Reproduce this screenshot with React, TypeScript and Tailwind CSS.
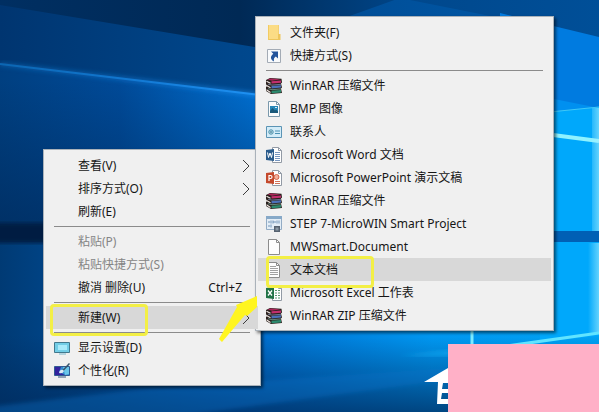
import type { ReactNode } from "react";
import clsx from "clsx";

type Item = {
  label?: string;
  icon?: ReactNode;
  shortcut?: string;
  submenu?: boolean;
  disabled?: boolean;
  active?: boolean;
  mark?: string;
};

const svgProps = { width: 16, height: 16, viewBox: "0 0 16 16", "aria-hidden": true };

// ICONS
function FolderIcon() {
  return (
    <svg {...svgProps}>
      <path d="M2 0h11v15H2z" fill="#fbdc85" />
      <path d="M2 0h1v15H2z" fill="#f2cb62" />
      <path d="M12 9h2.500v6H3v-1h9z" fill="#edc55c" />
      <path d="M12.500 0v9" fill="none" stroke="#f3d074" />
    </svg>
  );
}

function ShortcutIcon() {
  return (
    <svg {...svgProps}>
      <path d="M1.500 1.500h13v13h-13z" fill="#f8fafc" stroke="#a3abb5" />
      <path
        d="M5 3.500h7v7L9.800 8.400C8 9.500 7.500 11 8 13.500 4 11.500 4.200 8.200 7.300 5.800z"
        fill="#24559c"
      />
    </svg>
  );
}

function RarIcon() {
  return (
    <svg {...svgProps}>
      <path d="M0 2 4 0l11.500.8.5 3.700-1 1 1 4-1 1 1 4.500-11 1-5-3V9l1-1-1-2z" fill="#2a201d" />
      <path d="m1.500 1.500 3-1 10 .8-8.500 1.400z" fill="#a92558" />
      <path d="M5.500 3.300 15 2.600v2.200l-9.500.8z" fill="#c22f6e" />
      <path d="m5.500 8 9.500-.7v2.300l-9.500.8z" fill="#4b70ba" />
      <path d="m5.500 12.800 9.500-.7v2.300l-9.500.8z" fill="#2b8a6e" />
      <path d="m.5 3.200 4 2M.5 7.500l4 2.300M.5 11.800l4 2.700" stroke="#efe8e3" strokeWidth="1.100" />
      <path d="m2 6.200 4 .9 9-.8" fill="none" stroke="#8498bd" strokeWidth=".7" />
      <path d="m2 10.700 4 1 9-.8" fill="none" stroke="#7fb5a4" strokeWidth=".7" />
    </svg>
  );
}

function BmpIcon() {
  return (
    <svg {...svgProps}>
      <path d="M2.500.5h8l3 3v12h-11z" fill="#f9fbfc" stroke="#7a98ab" />
      <path d="M10.500.5v3h3" fill="none" stroke="#7a98ab" />
      <path d="M4 5h8v7H4z" fill="#2586b8" />
      <path d="m4 10 2.500-3L9 9.500l1-1 2 2V12H4z" fill="#195879" />
      <path d="M9 6h2v1H9z" fill="#d1f1fb" />
    </svg>
  );
}

function ContactIcon() {
  return (
    <svg {...svgProps}>
      <path d="M.5 2.500h15v11H.5z" fill="#d3ecf8" stroke="#5b94b5" />
      <circle cx="5" cy="8" r="2.200" fill="#bfe3ef" stroke="#4b8ea9" />
      <path d="M4 8h2" stroke="#2c6682" />
      <path d="M9 7h5M9 9.500h5" stroke="#4a91b4" />
    </svg>
  );
}

function OfficeIcon({ kind }: { kind: "word" | "ppt" | "excel" }) {
  const color = { word: "#2b5c8c", ppt: "#c4492c", excel: "#217346" }[kind];
  return (
    <svg {...svgProps}>
      <path d="M6.500.5h6l3 3v12h-9z" fill="#fff" stroke="#929aa5" />
      <path d="M12.500.5v3h3" fill="none" stroke="#929aa5" />
      {kind === "word" && <path d="M9 5.500h5M9 7.500h5M9 9.500h5M9 11.500h5M9 13.500h5" stroke="#7796bf" />}
      {kind === "ppt" && (
        <>
          <circle cx="10.500" cy="7" r="2.500" fill="#f1b29f" stroke="#cb4a2b" strokeWidth=".8" />
          <path d="M9 11.500h5M9 13.500h5" stroke="#d07257" />
        </>
      )}
      {kind === "excel" && <path d="M9 5.500h2m1 0h2M9 8h2m1 0h2M9 10.500h2m1 0h2M9 13h2m1 0h2" stroke="#58956f" />}
      <path d="m0 3 8-1v12l-8-1z" fill={color} />
      {kind === "word" && <path d="m1.500 5.500 1 5L4 6l1.500 4.500 1-5" fill="none" stroke="#fff" />}
      {kind === "ppt" && <path d="M3 11V5.500h1.500a1.500 1.500 0 0 1 0 3H3" fill="none" stroke="#fff" strokeWidth="1.200" />}
      {kind === "excel" && <path d="m2 5.500 4 5m0-5-4 5" fill="none" stroke="#fff" strokeWidth="1.300" />}
    </svg>
  );
}

function StepIcon() {
  return (
    <svg {...svgProps}>
      <path d="M.5.500h15v13H.5z" fill="#e3edf6" stroke="#93acc5" />
      <path d="M0 0h16v3H0z" fill="#87a9c8" />
      <path d="M2 6h2m1-1.500v3m2-3v3M7 6h3m1-1.500v3m2-3v3M2 10h2m1-1.500v3" stroke="#7295b8" />
      <path d="M8 10h6v6H8z" fill="#566270" />
      <path d="M9.500 11.500h3v3h-3z" fill="#8b98a4" />
    </svg>
  );
}

function PageIcon({ lines }: { lines?: boolean }) {
  return (
    <svg {...svgProps}>
      <path d="M2.500.5h8l3 3v12h-11z" fill="#fdfdfd" stroke="#8c8c8c" />
      <path d="M10.500.5v3h3" fill="none" stroke="#8c8c8c" />
      {lines && <path d="M4 4.500h6M4 6.500h8M4 8.500h8M4 10.500h8M4 12.500h8" stroke="#a1a1a1" />}
    </svg>
  );
}

function DisplayIcon() {
  return (
    <svg {...svgProps}>
      <path d="M.5 2.500h15v10H.5z" fill="#72cde6" stroke="#42788d" />
      <path d="M4 5h9v5H4z" fill="#a9eafa" />
      <path d="M5 14h7" stroke="#79b6ca" />
    </svg>
  );
}

function PersonalizeIcon() {
  return (
    <svg {...svgProps}>
      <path d="M.5 3.500h15v9H.5z" fill="#3389cd" stroke="#315b91" />
      <path d="M1 4h6l-2 5 6 3H1z" fill="#32239e" />
      <path d="M9 4h6v7l-4 1z" fill="#69c5e9" />
      <path d="M15.500.5 9 7.500" stroke="#36536c" strokeWidth="1.500" />
      <path d="M5 10q1-4 4-3l1 1q-1 3-5 2" fill="#dce9f4" />
      <path d="M4 14h8" stroke="#36577d" />
    </svg>
  );
}

// an empty entry is a separator
const desktopItems: Item[] = [
  { label: "查看(V)", submenu: true },
  { label: "排序方式(O)", submenu: true },
  { label: "刷新(E)" },
  {},
  { label: "粘贴(P)", disabled: true },
  { label: "粘贴快捷方式(S)", disabled: true },
  { label: "撤消 删除(U)", shortcut: "Ctrl+Z" },
  {},
  { label: "新建(W)", submenu: true, active: true, mark: "left-1 w-[98px]" },
  {},
  { label: "显示设置(D)", icon: <DisplayIcon /> },
  { label: "个性化(R)", icon: <PersonalizeIcon /> },
];

const newItems: Item[] = [
  { label: "文件夹(F)", icon: <FolderIcon /> },
  { label: "快捷方式(S)", icon: <ShortcutIcon /> },
  {},
  { label: "WinRAR 压缩文件", icon: <RarIcon /> },
  { label: "BMP 图像", icon: <BmpIcon /> },
  { label: "联系人", icon: <ContactIcon /> },
  { label: "Microsoft Word 文档", icon: <OfficeIcon kind="word" /> },
  { label: "Microsoft PowerPoint 演示文稿", icon: <OfficeIcon kind="ppt" /> },
  { label: "WinRAR 压缩文件", icon: <RarIcon /> },
  { label: "STEP 7-MicroWIN Smart Project", icon: <StepIcon /> },
  { label: "MWSmart.Document", icon: <PageIcon /> },
  { label: "文本文档", icon: <PageIcon lines />, active: true, mark: "left-2 w-[108px]" },
  { label: "Microsoft Excel 工作表", icon: <OfficeIcon kind="excel" /> },
  { label: "WinRAR ZIP 压缩文件", icon: <RarIcon /> },
];

function Menu({ items, name, className }: { items: Item[]; name: string; className: string }) {
  return (
    <div
      role="menu"
      aria-label={name}
      className={clsx(
        "absolute flex flex-col border border-[#aab2ba] bg-[#f0f0f0] px-[2px] pt-1 pb-[3px] shadow-[2px_2px_3px_rgba(0,0,0,0.55)]",
        className
      )}
    >
      {items.map((item, i) =>
        item.label ? (
          <button
            key={i}
            type="button"
            role="menuitem"
            disabled={item.disabled}
            className={clsx(
              "relative flex h-[23px] items-center gap-2 px-2 text-left whitespace-nowrap",
              item.active ? "z-10 bg-[#d8d8d8]" : "hover:bg-[#e2e2e2]",
              item.disabled ? "text-[#858585]" : "text-[#161616]"
            )}
          >
            <span className="size-4 shrink-0">{item.icon}</span>
            <span className="grow">{item.label}</span>
            {item.shortcut && <span className="pr-2">{item.shortcut}</span>}
            {item.submenu && (
              <svg width="8" height="14" viewBox="0 0 8 14" fill="none" stroke="#3c3c3c" aria-hidden="true">
                <path d="m1 1 6 6-6 6" />
              </svg>
            )}
            {item.mark && (
              <span className={clsx("absolute -top-[2px] h-8 rounded-sm border-3 border-[#f3ef45]", item.mark)} />
            )}
          </button>
        ) : (
          <hr key={i} className="mx-2 my-[3px] border-t border-[#8b8b8b]" />
        )
      )}
    </div>
  );
}

function Wallpaper() {
  return (
    <svg
      className="absolute inset-0 size-full"
      viewBox="0 0 599 412"
      preserveAspectRatio="none"
      aria-hidden="true"
    >
      <defs>
        <linearGradient id="sky">
          <stop offset="0" stopColor="#003570" />
          <stop offset=".4" stopColor="#00478c" />
          <stop offset="1" stopColor="#005cae" />
        </linearGradient>
        <linearGradient id="top">
          <stop offset="0" stopColor="#002f62" />
          <stop offset=".4" stopColor="#002955" />
          <stop offset=".7" stopColor="#00488d" />
          <stop offset="1" stopColor="#004f98" />
        </linearGradient>
        <linearGradient id="mid">
          <stop offset="0" stopColor="#003f80" />
          <stop offset=".2" stopColor="#004a98" />
          <stop offset=".43" stopColor="#0071d4" />
          <stop offset="1" stopColor="#008df4" />
        </linearGradient>
        <linearGradient id="midShade" x2="0" y2="1">
          <stop offset=".1" stopColor="#002653" stopOpacity="0" />
          <stop offset="1" stopColor="#002653" stopOpacity=".6" />
        </linearGradient>
        <linearGradient id="beam" gradientUnits="userSpaceOnUse" x1="0" x2="260">
          <stop offset="0" stopColor="#0b66b2" />
          <stop offset=".5" stopColor="#1278d2" />
          <stop offset="1" stopColor="#1f92f4" />
        </linearGradient>
        <linearGradient id="low">
          <stop offset="0" stopColor="#003a74" />
          <stop offset=".4" stopColor="#006acb" />
          <stop offset=".72" stopColor="#0098f2" />
          <stop offset="1" stopColor="#00a4f6" />
        </linearGradient>
        <linearGradient id="lowShade" x2="0" y2="1">
          <stop offset=".55" stopColor="#002a5c" stopOpacity="0" />
          <stop offset="1" stopColor="#002a5c" stopOpacity=".75" />
        </linearGradient>
        <linearGradient id="edge">
          <stop offset="0" stopColor="#a8efff" stopOpacity="0" />
          <stop offset="1" stopColor="#a8efff" stopOpacity=".6" />
        </linearGradient>
        <filter id="soft">
          <feGaussianBlur stdDeviation="2" />
        </filter>
      </defs>
      <path d="M0 0h599v412H0z" fill="url(#sky)" />
      <path d="M0 0h599v38L400-2 260 48 0 5z" fill="url(#top)" />
      <path d="m500 13 99 24v90l-99-20z" fill="#007be0" />
      <path d="M0 64 260 95l240 35h99v103H0z" fill="url(#mid)" />
      <path d="M0 64 260 95v138H0z" fill="url(#midShade)" />
      <path d="m554 99 45 9v30h-45z" fill="#0090f0" />
      <path d="m0 64 260 31" stroke="url(#beam)" strokeWidth="5" opacity=".5" filter="url(#soft)" />
      <path d="m0 64 260 31" stroke="url(#beam)" strokeWidth="2" />
      <path d="M0 242h599v170H0z" fill="url(#low)" />
      <path d="M0 242h599v170H0z" fill="url(#lowShade)" />
      <path d="M-20 223h280v20H-20z" fill="#001b42" filter="url(#soft)" />
      <path d="m-20 408 170-20 297-20v12L150 420H-20z" fill="#0874cc" opacity=".35" filter="url(#soft)" />
      {/* window panes on the right */}
      <path d="m540 113 59-6v124h-59z" fill="#00a8fb" />
      <path d="M540 242h59v94l-59 6z" fill="#00a8fb" />
      <path d="m540 113 59-6" stroke="#40c8f6" />
      <path d="m553 135 46 6" stroke="#8ff2ff" strokeWidth="4" />
      <path d="M540 231h59v11h-59z" fill="#0060b5" />
      <path d="M592 108h7v123h-7zM588 243h11v91h-11z" fill="url(#edge)" />
      <path d="m500 347 99-14" stroke="#61e4ff" strokeWidth="3" />
      <path d="M472 331v14" stroke="#7ceaff" strokeWidth="3" />
      <path d="m400 356 50-6v6z" fill="#15aef5" opacity=".6" filter="url(#soft)" />
    </svg>
  );
}

export default function App() {
  return (
    <main className="relative min-h-screen overflow-hidden bg-[#003a78] font-['Noto_Sans','Noto_Sans_CJK_SC',sans-serif] text-[12px] leading-4">
      <Wallpaper />

      {/* LOGO, partly under the pink panel */}
      <svg
        className="absolute right-[143px] bottom-2 h-9 w-8"
        viewBox="0 0 32 36"
        fill="#fff"
        aria-hidden="true"
      >
        <path d="M0 14 24 0h8v15H19l-1 6h14v4H18l-1 6h15v5H13l1-22z" />
      </svg>
      <div className="absolute right-0 bottom-0 h-[68px] w-[151px] bg-[#ffb0c7]" />

      <Menu items={desktopItems} name="桌面" className="top-[149px] left-[43px] w-[218px]" />
      <Menu items={newItems} name="新建" className="top-4 left-[255px] w-[299px]" />

      {/* ARROW from 新建 to the submenu */}
      <svg
        className="pointer-events-none absolute top-[296px] left-[219px] z-20"
        width="39"
        height="46"
        viewBox="0 0 39 46"
        aria-hidden="true"
      >
        <path d="M0 43 18 11l-1-2L38 0v11L28 20l-2-1L3 46z" fill="#fff51f" />
      </svg>
    </main>
  );
}
